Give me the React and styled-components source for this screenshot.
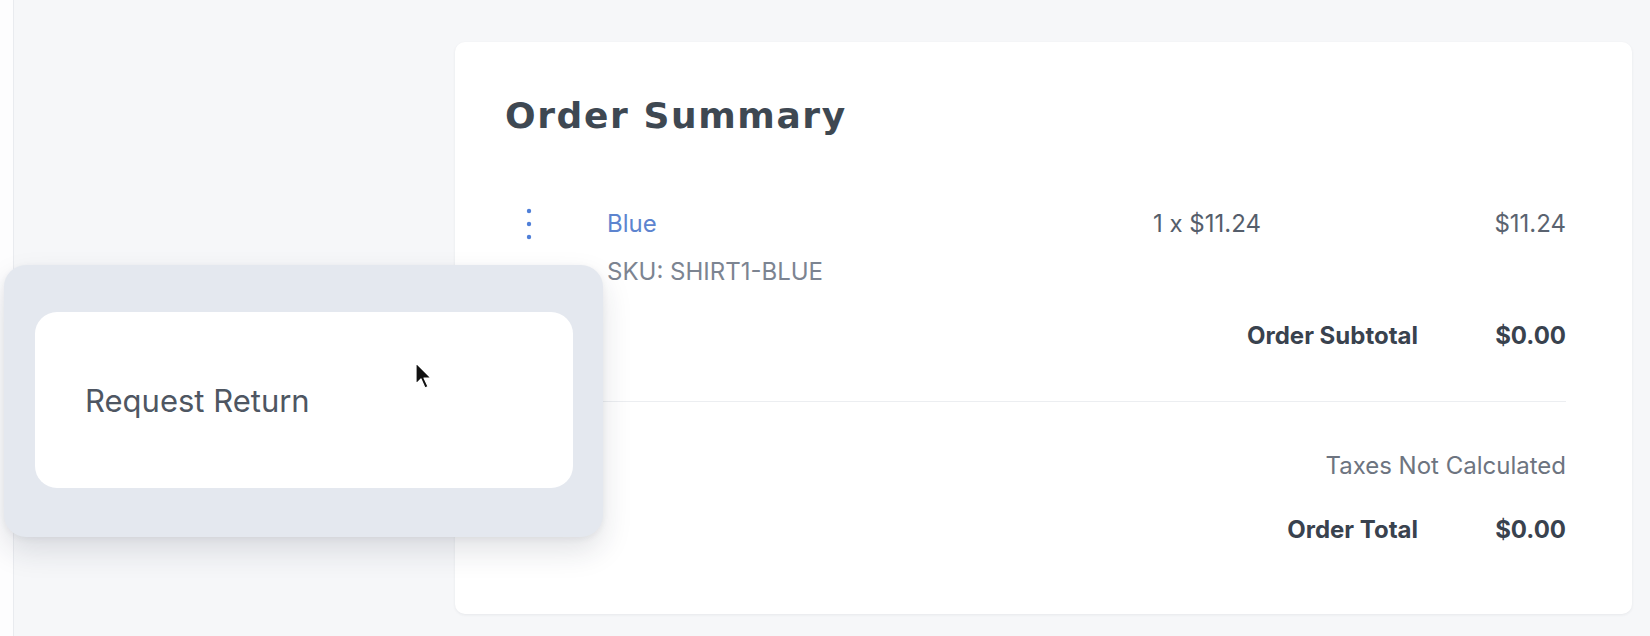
import React from "react";
import styled, { createGlobalStyle } from "styled-components";

const GlobalStyle = createGlobalStyle`
  html, body { margin: 0; padding: 0; }
  body {
    background: #f6f7f9;
    font-family: Inter, "Liberation Sans", sans-serif;
    -webkit-font-smoothing: antialiased;
  }
  #root { min-height: 636px; }
`;

const Page = styled.div`
  display: flex;
  min-height: 636px;
  position: relative;
  overflow: hidden;
`;

const SideStrip = styled.aside`
  width: 13px;
  flex: none;
  background: #fdfdfe;
  border-right: 1px solid #e9ebef;
`;

const Main = styled.main`
  flex: 1;
  display: grid;
  grid-template-columns: 417px 1fr;
  padding: 42px 18px 24px 24px;
  align-items: start;
`;

const Card = styled.section`
  grid-column: 2;
  background: #ffffff;
  border-radius: 10px;
  box-shadow: 0 1px 3px rgba(30, 41, 59, 0.07);
  padding: 54px 66px 68px 50px;
`;

const Heading = styled.h2`
  margin: 0;
  font-family: "DejaVu Sans", sans-serif;
  font-weight: 700;
  font-size: 36px;
  line-height: 40px;
  letter-spacing: 1.6px;
  color: #3e4852;
`;

const ItemRow = styled.div`
  display: grid;
  grid-template-columns: 102px 1fr 293px 120px;
  margin-top: 72px;
  font-size: 24px;
  line-height: 32px;
`;

const KebabCell = styled.div`
  padding-left: 21px;
  display: flex;
  align-items: flex-start;
`;

const ProductCell = styled.div`
  display: flex;
  flex-direction: column;
  gap: 16px;
`;

const ProductName = styled.span`
  color: #5d84cf;
`;

const Sku = styled.span`
  color: #7c8491;
`;

const Qty = styled.div`
  color: #555e6b;
`;

const Price = styled.div`
  color: #5a6370;
  text-align: right;
`;

const TotalRow = styled.div`
  display: grid;
  grid-template-columns: 1fr 120px;
  column-gap: 28px;
  margin-top: ${(p) => p.$mt}px;
  font-size: 24px;
  line-height: 32px;
  font-weight: 700;
  color: #39424e;
  text-align: right;
`;

const Note = styled.div`
  margin-top: ${(p) => p.$mt}px;
  font-size: 24px;
  line-height: 32px;
  color: #6d7480;
  text-align: right;
`;

const Divider = styled.hr`
  margin: 49px 0 0 0;
  border: none;
  height: 1px;
  background: #eceef1;
`;

const Menu = styled.div`
  position: absolute;
  left: 4px;
  top: 265px;
  width: 599px;
  height: 272px;
  box-sizing: border-box;
  padding: 47px 30px 49px 31px;
  background: #e4e8ef;
  border-radius: 22px;
  box-shadow: 0 14px 30px rgba(30, 41, 59, 0.13), 0 2px 6px rgba(30, 41, 59, 0.06);
`;

const MenuItem = styled.div`
  position: relative;
  height: 100%;
  display: flex;
  align-items: center;
  padding-left: 50px;
  background: #ffffff;
  border-radius: 22px;
  font-size: 31px;
  color: #4e5662;
`;

const Cursor = styled.svg`
  position: absolute;
  left: 380px;
  top: 50px;
`;

function KebabIcon() {
  return (
    <svg width="6" height="32" viewBox="0 0 6 32">
      <circle cx="3" cy="3" r="2.2" fill="#4f7fd8" />
      <circle cx="3" cy="16" r="2.2" fill="#4f7fd8" />
      <circle cx="3" cy="29" r="2.2" fill="#4f7fd8" />
    </svg>
  );
}

export default function App() {
  return (
    <>
      <GlobalStyle />
      <Page>
        <SideStrip />
        <Main>
          <Card>
            <Heading>Order Summary</Heading>
            <ItemRow>
              <KebabCell>
                <KebabIcon />
              </KebabCell>
              <ProductCell>
                <ProductName>Blue</ProductName>
                <Sku>SKU: SHIRT1-BLUE</Sku>
              </ProductCell>
              <Qty>1 x $11.24</Qty>
              <Price>$11.24</Price>
            </ItemRow>
            <TotalRow $mt={32}>
              <span>Order Subtotal</span>
              <span>$0.00</span>
            </TotalRow>
            <Divider />
            <Note $mt={48}>Taxes Not Calculated</Note>
            <TotalRow $mt={32}>
              <span>Order Total</span>
              <span>$0.00</span>
            </TotalRow>
          </Card>
        </Main>
        <Menu>
          <MenuItem>
            Request Return
            <Cursor width="18" height="28" viewBox="0 0 18 28">
              <path
                d="M1 1 L1 22 L6 17 L10 26 L13 24.6 L9 16 L16 16 Z"
                fill="#111"
                stroke="#fff"
                strokeWidth="1.2"
                strokeLinejoin="round"
              />
            </Cursor>
          </MenuItem>
        </Menu>
      </Page>
    </>
  );
}
